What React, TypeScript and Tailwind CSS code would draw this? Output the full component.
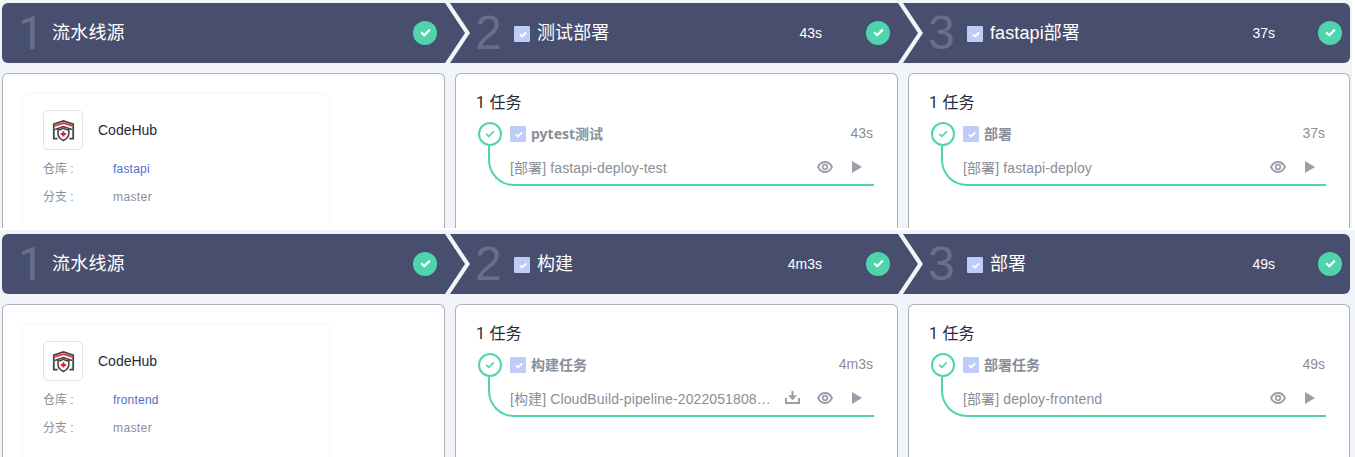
import React from "react";

const CJK = "font-['Liberation_Sans','Noto_Sans_CJK_SC',sans-serif]";

function Check({ className }: { className: string }) {
  return (
    <svg viewBox="0 0 12 10" className={className} fill="none" stroke="currentColor">
      <path d="M1.2 4.8 4.6 8 10.8 1.8" />
    </svg>
  );
}

function Box() {
  return (
    <span className="flex size-4 shrink-0 items-center justify-center rounded-[1px] bg-[#beccfa]">
      <Check className="ml-px h-[7px] w-2 stroke-[2.8] text-white" />
    </span>
  );
}

function Chevron() {
  return (
    <svg viewBox="0 0 25 60" className="h-[60px] w-[25px] shrink-0">
      <path d="M0 0H5L25 30 5 60H0L20 30Z" fill="#f1f5f9" />
    </svg>
  );
}

function Done() {
  return (
    <span className="flex size-6 shrink-0 items-center justify-center rounded-full bg-[#50d4ab]">
      <Check className="mb-px h-[9px] w-[11px] stroke-[2.4] text-white" />
    </span>
  );
}

function CodeHubLogo() {
  return (
    <svg viewBox="0 0 24 24" className="size-6" fill="none">
      <path d="M6.6 20.6H2.8V6.2L12.4 3 22.2 6.2V20.6H18.4" stroke="#464646" strokeWidth="1.8" />
      <path d="M3.7 7.9 12.4 5.2 21.3 7.9" stroke="#e8323c" strokeWidth="1.9" />
      <path d="M4 11.6 12.4 8.6 21 11.6" stroke="#464646" strokeWidth="1.6" />
      <path d="M12.4 10.2C14.2 11.5 15.9 11.9 17.8 11.9V15.6C17.8 18.6 15.6 21 12.4 22.5 9.2 21 7 18.6 7 15.6V11.9C8.9 11.9 10.6 11.5 12.4 10.2Z" fill="#fff" stroke="#464646" strokeWidth="1.6" />
      <path d="M12.4 13.2V18.6M9.7 15.9H15.1" stroke="#ed1c2a" strokeWidth="2" />
    </svg>
  );
}

function Eye() {
  return (
    <svg viewBox="0 0 16 12" className="h-3 w-4" fill="none" stroke="#9a9fab">
      <path d="M1 6C2.6 2.8 5 1 8 1S13.4 2.8 15 6C13.4 9.2 11 11 8 11S2.6 9.2 1 6Z" strokeWidth="1.8" />
      <circle cx="8" cy="6" r="2.3" strokeWidth="1.7" />
    </svg>
  );
}

function Play() {
  return (
    <svg viewBox="0 0 10 12" className="h-3 w-[10px]">
      <path d="M0 0 10 6 0 12Z" fill="#9a9fab" />
    </svg>
  );
}

function Download() {
  return (
    <svg viewBox="0 0 15 13" className="mb-[2px] h-[13px] w-[15px]" fill="none" stroke="#9a9fab" strokeWidth="2">
      <path d="M1 7V12H14V7M7.5 0V7" />
      <path d="M3 4.2H12L7.5 9.2Z" fill="#9a9fab" stroke="none" />
    </svg>
  );
}

type Stage = {
  title: string;
  task: string;
  time: string;
  prefix: string;
  name: string;
  download?: boolean;
};

function StageHead({
  index,
  stage,
  className,
  timeClass,
}: {
  index: number;
  stage: Stage;
  className: string;
  timeClass: string;
}) {
  return (
    <div className={`flex h-[60px] items-center ${className}`}>
      <span className="w-[26px] text-[48px] leading-[60px] text-[#696f8b]">{index}</span>
      <span className="mt-[2px] ml-[13px] flex">
        <Box />
      </span>
      <span className="ml-[7px] text-[18px] leading-[26px] tracking-[0.1px] text-white">{stage.title}</span>
      <span className={`ml-auto text-sm text-white ${timeClass}`}>{stage.time}</span>
      <Done />
    </div>
  );
}

function StageCard({ stage, lineClass, iconsClass }: { stage: Stage; lineClass: string; iconsClass: string }) {
  return (
    <div className="h-full rounded-t-md border border-b-0 border-[#adb0b8] bg-white pt-4 pr-6 pl-5">
      <div className="h-6 text-base leading-[26px] text-[#252b3a]">
        <span className="font-['Roboto',sans-serif]">1</span> 任务
      </div>
      <div className="mt-2 ml-[2px] flex h-6 items-center">
        <span className="flex size-6 shrink-0 items-center justify-center rounded-full border-2 border-[#50d4ab]">
          <Check className="h-2 w-[10px] stroke-2 text-[#50d4ab]" />
        </span>
        <span className="ml-2 flex">
          <Box />
        </span>
        <span className="ml-[5px] font-['Noto_Sans','Noto_Sans_CJK_SC',sans-serif] text-[14px] leading-6 font-bold text-[#8a8e99]">
          {stage.task}
        </span>
        <span className="mb-[2px] ml-auto text-sm text-[#8a8e99]">{stage.time}</span>
      </div>
      <div
        className={`ml-3 flex h-10 items-center rounded-bl-[26px] border-b-2 border-l-2 border-[#50d4ab] pt-[5px] pl-5 ${lineClass}`}
      >
        <span className="text-sm tracking-[0.11px] whitespace-nowrap text-[#8a8e99]">
          [{stage.prefix}] {stage.name}
        </span>
        <span className={`mb-px ml-auto flex items-center ${iconsClass}`}>
          {stage.download && (
            <span className="mr-[17px]">
              <Download />
            </span>
          )}
          <Eye />
          <span className="ml-[19px]">
            <Play />
          </span>
        </span>
      </div>
    </div>
  );
}

function SourceCard({ repo }: { repo: string }) {
  return (
    <div className="h-full rounded-t-md border border-b-0 border-[#adb0b8] bg-white pt-5 pl-5">
      <div className="h-full w-[306px] rounded-t-md px-5 pt-4 shadow-[0_0_4px_rgba(0,0,0,0.07)]">
        <div className="flex items-center gap-[15px]">
          <span className="flex size-10 items-center justify-center rounded-[5px] border border-[#dfe1e6]">
            <CodeHubLogo />
          </span>
          <span className="text-sm text-[#252b3a]">CodeHub</span>
        </div>
        <div className="mt-[5px] flex h-7 items-center text-xs text-[#8a8e99]">
          <span className="w-[70px]">仓库 :</span>
          <span className="tracking-[0.2px] text-[#526ecc]">{repo}</span>
        </div>
        <div className="flex h-7 items-center text-xs text-[#8a8e99]">
          <span className="w-[70px]">分支 :</span>
          <span className="tracking-[0.4px]">master</span>
        </div>
      </div>
    </div>
  );
}

function Pipeline({ repo, stages, className }: { repo: string; stages: [Stage, Stage]; className: string }) {
  return (
    <section className={`flex shrink-0 flex-col overflow-hidden pl-[2px] ${className}`}>
      <header className="flex h-[60px] w-[1348px] shrink-0 overflow-hidden rounded-md bg-[#484e6e]">
        <div className="flex w-[443px] items-center pr-2 pl-4">
          <span className="w-[26px] font-['Roboto',sans-serif] text-[46px] leading-[60px] text-[#696f8b]">1</span>
          <span className="ml-2 text-[18px] leading-[26px] tracking-[0.2px] text-white">流水线源</span>
          <span className="ml-auto flex">
            <Done />
          </span>
        </div>
        <Chevron />
        <StageHead index={2} stage={stages[0]} className="w-[428px] pr-2 pl-[5px]" timeClass="mr-11" />
        <Chevron />
        <StageHead index={3} stage={stages[1]} className="w-[427px] pr-2 pl-[5px]" timeClass="mr-[43px]" />
      </header>
      <div className="mt-[10px] grid min-h-0 flex-1 grid-cols-[443px_443px_442px] gap-[10px]">
        <SourceCard repo={repo} />
        <StageCard stage={stages[0]} lineClass="w-[386px]" iconsClass="mr-3" />
        <StageCard stage={stages[1]} lineClass="w-[385px]" iconsClass="mr-[11px]" />
      </div>
    </section>
  );
}

export default function App() {
  return (
    <main className={`flex h-[457px] w-[1355px] flex-col gap-[2px] overflow-hidden bg-white ${CJK}`}>
      <Pipeline
        className="h-[228px] w-[1352px] bg-[#f1f5f9] pt-[3px]"
        repo="fastapi"
        stages={[
          { title: "测试部署", task: "pytest测试", time: "43s", prefix: "部署", name: "fastapi-deploy-test" },
          { title: "fastapi部署", task: "部署", time: "37s", prefix: "部署", name: "fastapi-deploy" },
        ]}
      />
      <Pipeline
        className="h-[227px] w-[1355px] bg-[#f1f5f9] pt-1"
        repo="frontend"
        stages={[
          { title: "构建", task: "构建任务", time: "4m3s", prefix: "构建", name: "CloudBuild-pipeline-2022051808…", download: true },
          { title: "部署", task: "部署任务", time: "49s", prefix: "部署", name: "deploy-frontend" },
        ]}
      />
    </main>
  );
}
